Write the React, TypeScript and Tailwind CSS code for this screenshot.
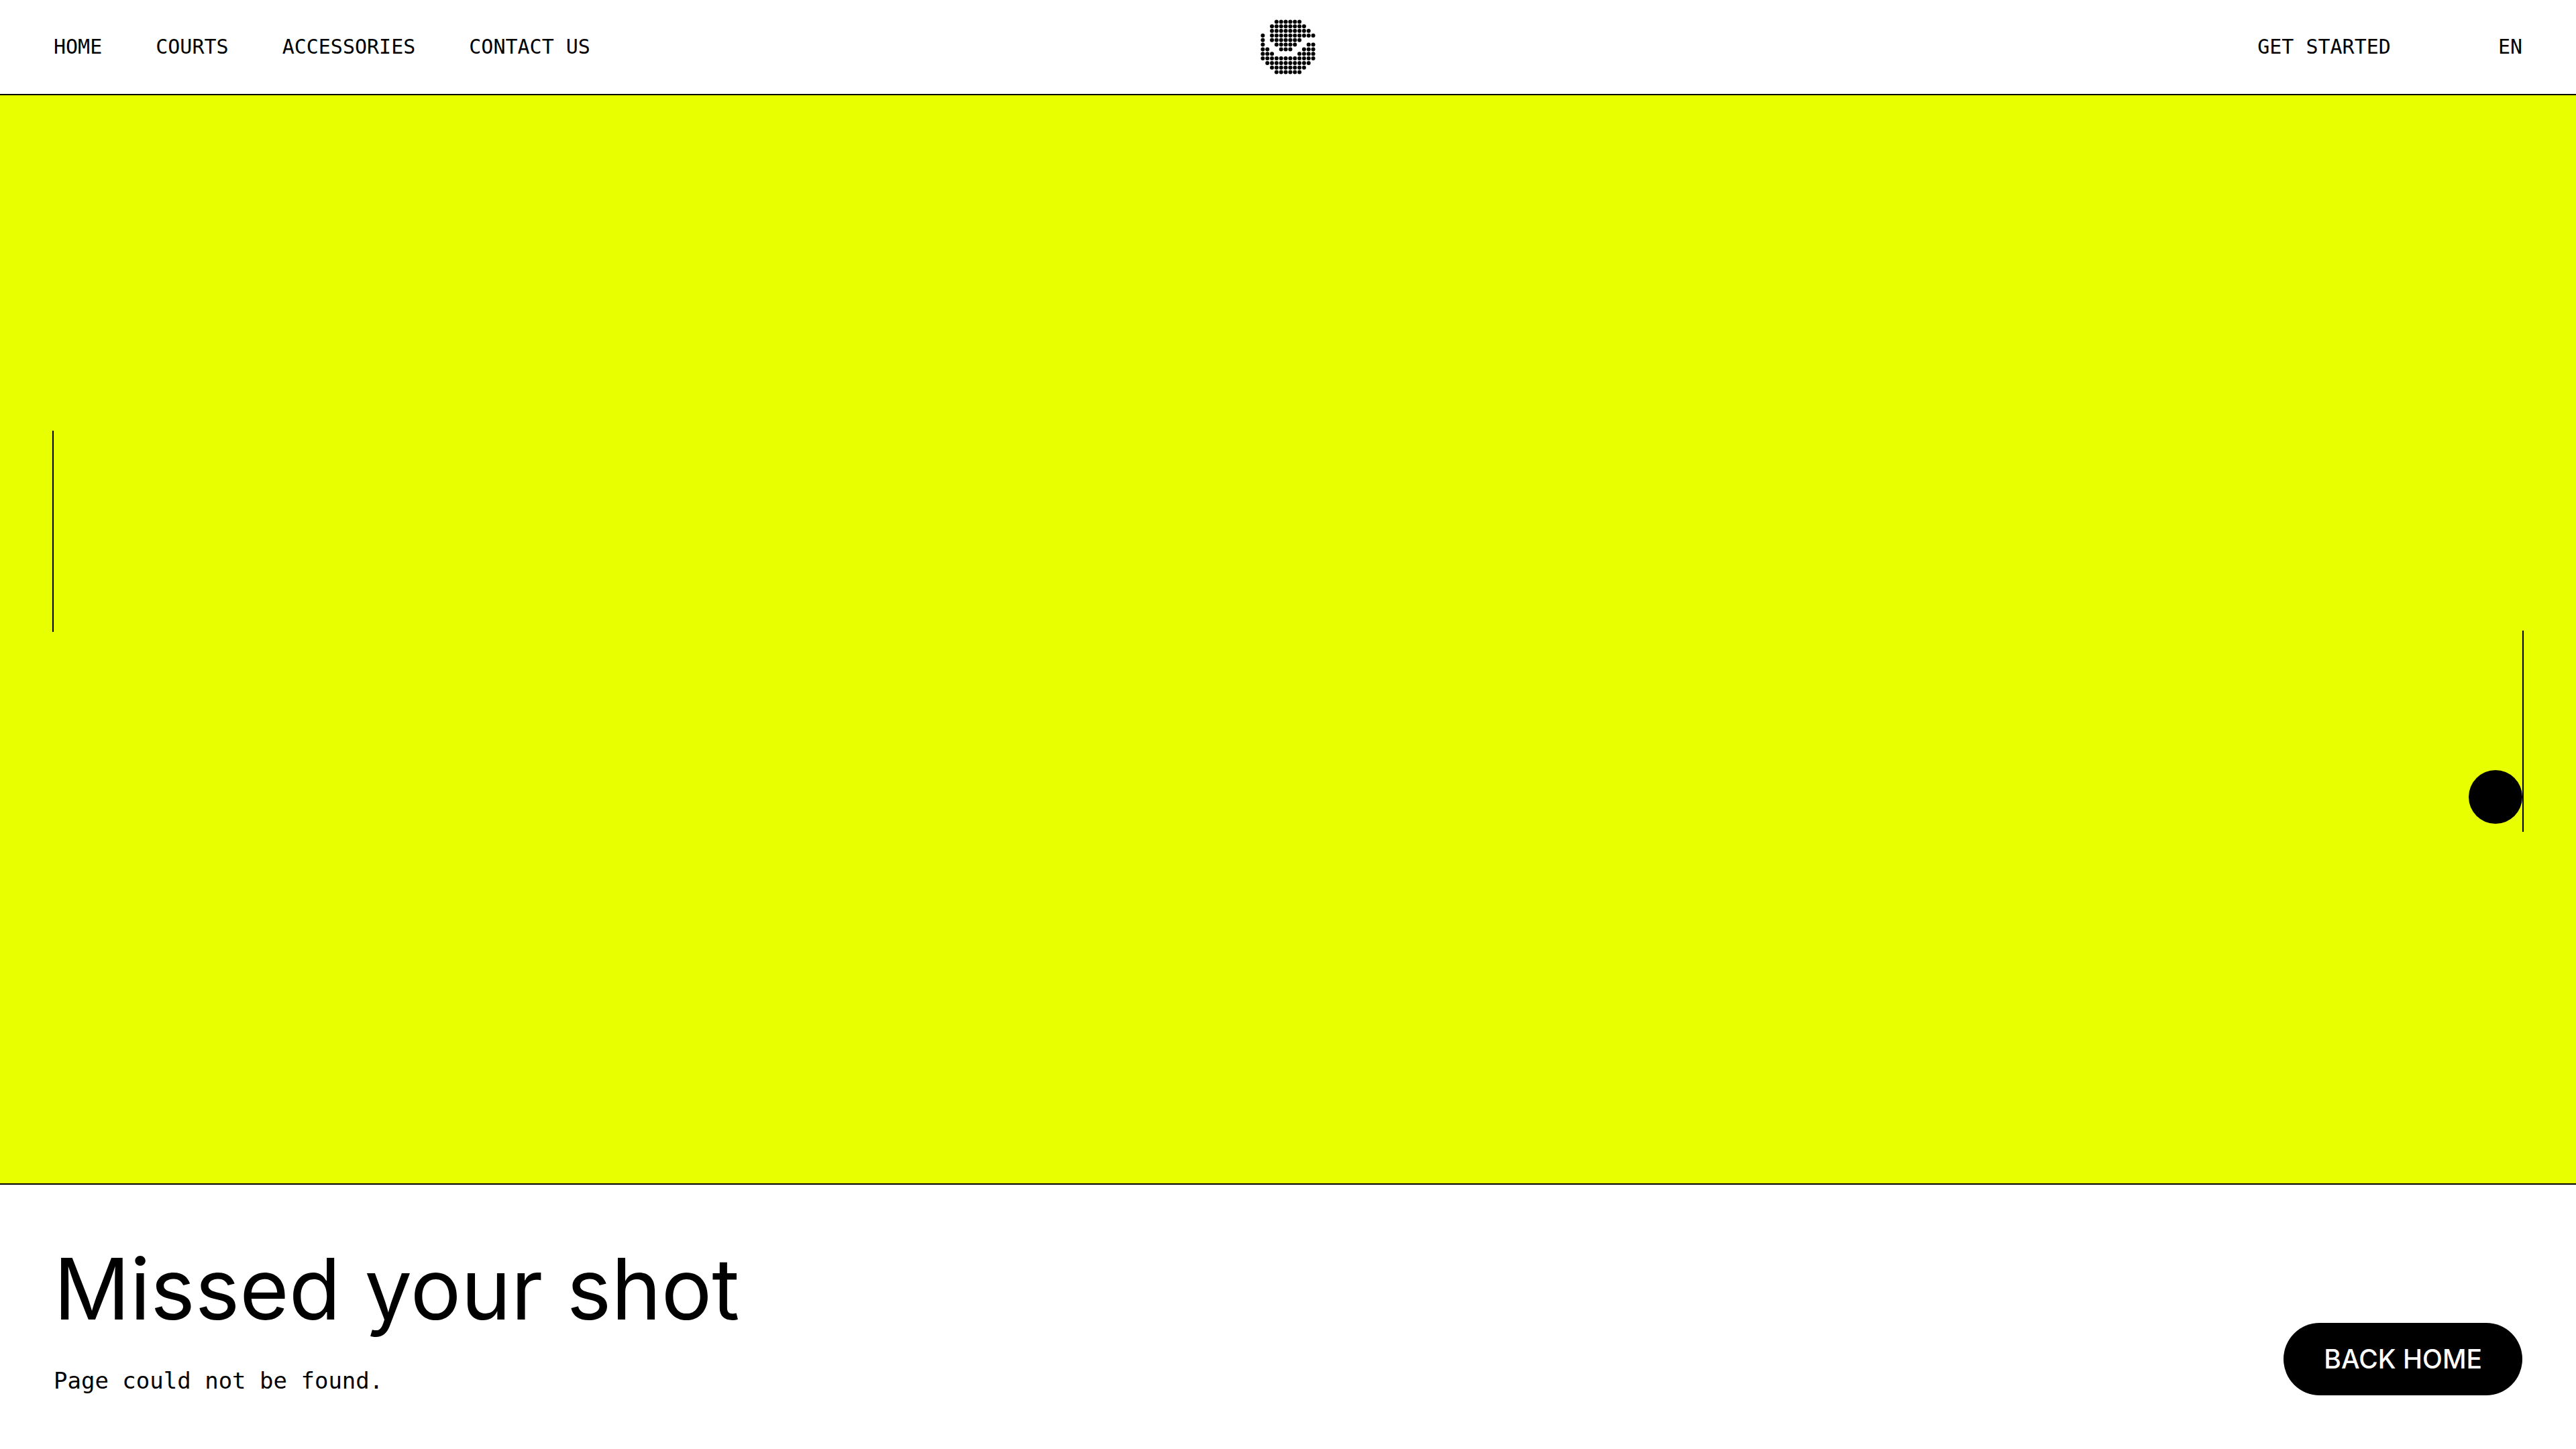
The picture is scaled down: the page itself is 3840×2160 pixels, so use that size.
import { useState } from "react";

const navLinks = ["Home", "Courts", "Accessories", "Contact us"];

// One string per row of the ball-shaped dot logo.
const logoRows = [
  "...######...",
  "..########..",
  "..#########.",
  "#.##########",
  "#.#######...",
  "#..#####..##",
  "##..###..###",
  "###.....####",
  "############",
  ".##########.",
  "..########..",
  "...######...",
];

function Logo() {
  return (
    <svg viewBox="0 0 12 12" className="size-[82px]" fill="currentColor" aria-hidden="true">
      {logoRows.flatMap((row, y) =>
        row.split("").map((cell, x) =>
          cell === "#" ? <circle key={`${x}-${y}`} cx={x + 0.5} cy={y + 0.5} r={0.44} /> : null,
        ),
      )}
    </svg>
  );
}

function Header() {
  return (
    <header className="grid h-[142px] grid-cols-[1fr_auto_1fr] items-center border-b-2 border-black px-20 font-['DejaVu_Sans_Mono',monospace] text-[30px] leading-10 uppercase">
      <nav className="flex gap-20">
        {navLinks.map((label) => (
          <a key={label} href="#">
            {label}
          </a>
        ))}
      </nav>
      <a href="#" aria-label="Home page">
        <Logo />
      </a>
      <div className="flex justify-end gap-40">
        <a href="#">Get started</a>
        <button type="button" className="uppercase">
          EN
        </button>
      </div>
    </header>
  );
}

function Game() {
  // Vertical positions are in percent of the field's height.
  const [field] = useState({ left: 30.8, right: 49.2, ball: 62 });
  return (
    <main className="relative flex-1 bg-[#e8ff00]">
      <div className="absolute left-[78px] h-[300px] w-0.5 bg-black" style={{ top: `${field.left}%` }} />
      <div className="absolute right-[78px] h-[300px] w-0.5 bg-black" style={{ top: `${field.right}%` }} />
      <div className="absolute right-20 size-20 rounded-full bg-black" style={{ top: `${field.ball}%` }} />
    </main>
  );
}

export default function App() {
  return (
    <div className="flex min-h-screen flex-col bg-white text-black">
      <Header />
      <Game />
      <footer className="flex items-end justify-between border-t-2 border-black p-20">
        <div>
          <h1 className="font-['Inter',sans-serif] text-[126px] leading-[150px]">Missed your shot</h1>
          <p className="mt-10 font-['DejaVu_Sans_Mono',monospace] text-[34px] leading-11">Page could not be found.</p>
        </div>
        <a
          href="#"
          className="rounded-full bg-black px-[60px] py-[30px] font-['Inter',sans-serif] text-[39px] leading-12 font-medium text-white uppercase"
        >
          Back home
        </a>
      </footer>
    </div>
  );
}
